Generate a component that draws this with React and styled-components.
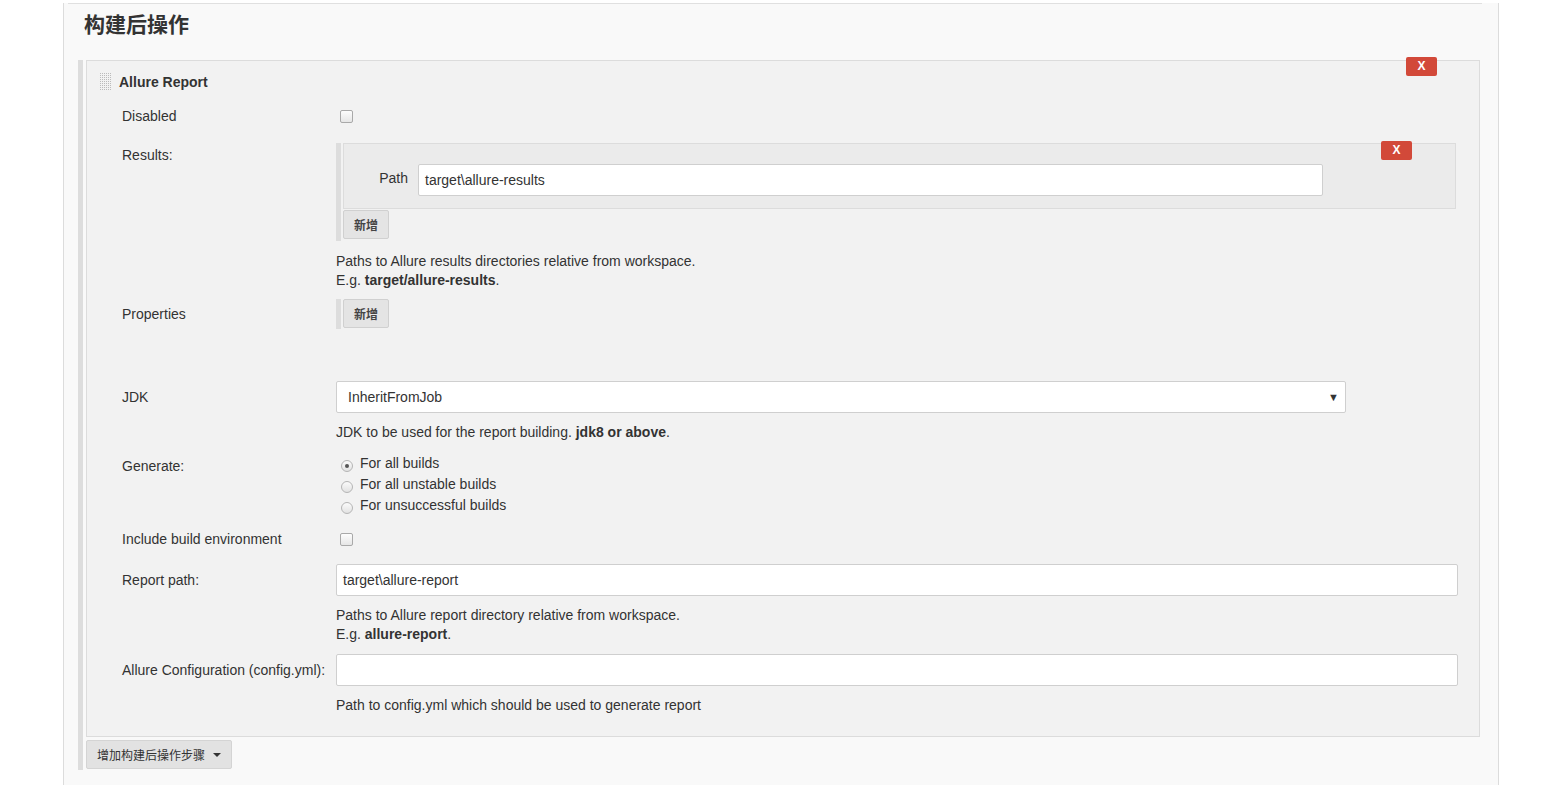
import React from "react";
import styled, { createGlobalStyle } from "styled-components";

const GlobalStyle = createGlobalStyle`
  html, body {
    margin: 0;
    padding: 0;
    background: #fff;
    font-family: "Liberation Sans", Arial, "Noto Sans CJK SC", sans-serif;
    font-size: 14px;
    color: #333;
  }
`;

const Page = styled.div`
  padding-left: 63px;
  height: 785px;
  overflow: hidden;
`;

const Main = styled.div`
  width: 1434px;
  height: 100%;
  background: #f9f9f9;
  border-left: 1px solid #dcdcdc;
  border-right: 1px solid #dcdcdc;
`;

const Section = styled.div`
  margin: 3px 16px 0 4px;
  border-top: 1px solid #e0e0e0;
`;

const SectionTitle = styled.h2`
  margin: 5px 0 0 16px;
  font-size: 21px;
  line-height: 28px;
  font-weight: bold;
  color: #333;
  font-family: "Noto Sans CJK SC", sans-serif;
`;

const Repeated = styled.div`
  margin: ${(p) => p.$margin};
  border-left: 5px solid #dddddd;
  padding-left: ${(p) => p.$gap || 2}px;
  padding-bottom: ${(p) => p.$bottom || 0}px;
`;

const Chunk = styled.div`
  position: relative;
  background: #f2f2f2;
  border: 1px solid #dcdcdc;
  padding: 0 21px 21px 35px;
`;

const ChunkHeader = styled.div`
  display: flex;
  align-items: center;
  height: 42px;
  margin-left: -22px;
  gap: 7px;
  font-weight: bold;
`;

const DeleteButton = styled.button`
  position: absolute;
  top: ${(p) => p.$top}px;
  right: ${(p) => p.$right}px;
  width: 31px;
  height: 19px;
  padding: 0;
  border: none;
  border-radius: 2px;
  background: #d24939;
  color: #fff;
  font-family: "Liberation Sans", Arial, sans-serif;
  font-size: 12px;
  font-weight: bold;
  line-height: 19px;
  cursor: pointer;
`;

const Row = styled.div`
  display: grid;
  grid-template-columns: 214px 1fr;
  align-items: ${(p) => p.$align || "center"};
  margin-top: ${(p) => p.$mt || 0}px;
  min-height: ${(p) => p.$h || 0}px;
`;

const Label = styled.div`
  line-height: 20px;
  padding-top: ${(p) => p.$pt || 0}px;
`;

const Help = styled.div`
  margin: ${(p) => p.$mt}px 0 0 214px;
  line-height: 19px;

  b {
    font-weight: bold;
  }
`;

const Checkbox = styled.span`
  display: block;
  width: 11px;
  height: 11px;
  margin-left: 4px;
  border: 1px solid #a9a9a9;
  border-radius: 2px;
  background: linear-gradient(#fdfdfd, #e6e6e6);
`;

const RadioList = styled.div`
  display: flex;
  flex-direction: column;
`;

const RadioItem = styled.label`
  display: flex;
  align-items: center;
  gap: 7px;
  height: 21px;
  line-height: 21px;
`;

const Radio = styled.span`
  position: relative;
  top: 2px;
  width: 10px;
  height: 10px;
  margin-left: 5px;
  border: 1px solid #b5b5b5;
  border-radius: 50%;
  background: linear-gradient(#fbfbfb, #e2e2e2);

  &::after {
    content: "";
    display: ${(p) => (p.$checked ? "block" : "none")};
    position: absolute;
    left: 3px;
    top: 3px;
    width: 4px;
    height: 4px;
    border-radius: 50%;
    background: #555;
  }
`;

const TextInput = styled.div`
  box-sizing: border-box;
  width: ${(p) => p.$w}px;
  height: 32px;
  padding: 0 6px;
  line-height: 30px;
  background: #fff;
  border: 1px solid #cfcfcf;
  border-radius: 2px;
`;

const Select = styled(TextInput)`
  display: flex;
  justify-content: space-between;
  padding: 0 6px 0 11px;
  font-size: 14px;

  span.arrow {
    font-size: 11px;
  }
`;

const InnerChunk = styled.div`
  position: relative;
  background: #ebebeb;
  border: 1px solid #dcdcdc;
  padding: 20px 0 12px 0;
`;

const PathRow = styled.div`
  display: flex;
  align-items: center;
  gap: 10px;
`;

const PathLabel = styled.span`
  width: 64px;
  text-align: right;
  line-height: 20px;
  position: relative;
  top: -2px;
`;

const AddButton = styled.button`
  display: block;
  margin-top: ${(p) => p.$mt || 0}px;
  width: 46px;
  height: 29px;
  padding: 0;
  border: 1px solid #d0d0d0;
  border-radius: 2px;
  background: #e4e4e4;
  color: #444;
  font-family: "Noto Sans CJK SC", sans-serif;
  font-size: 12px;
  font-weight: bold;
`;

const StepButton = styled.button`
  display: flex;
  align-items: center;
  gap: 8px;
  margin-top: 3px;
  height: 29px;
  padding: 0 10px;
  border: 1px solid #d4d4d4;
  border-radius: 2px;
  background: #e2e2e2;
  color: #333;
  font-family: "Noto Sans CJK SC", sans-serif;
  font-size: 12px;
`;

const Caret = styled.span`
  width: 0;
  height: 0;
  border-left: 4px solid transparent;
  border-right: 4px solid transparent;
  border-top: 4px solid #333;
`;

const DragHandle = () => {
  const dots = [];
  for (let r = 0; r < 9; r++) {
    for (let c = 0; c < 6; c++) {
      dots.push(<rect key={`${r}-${c}`} x={c * 2} y={r * 2} width="1" height="1" fill="#bbb" />);
    }
  }
  return (
    <svg width="12" height="18" viewBox="0 0 12 18">
      {dots}
    </svg>
  );
};

export default function App() {
  return (
    <>
      <GlobalStyle />
      <Page>
        <Main>
          <Section>
            <SectionTitle>构建后操作</SectionTitle>
          </Section>

          <Repeated $margin="23px 18px 0 14px" $gap={3} $bottom={1}>
            <Chunk>
              <DeleteButton $top={-4} $right={42}>X</DeleteButton>
              <ChunkHeader>
                <DragHandle />
                Allure Report
              </ChunkHeader>

              <Row $h={26}>
                <Label>Disabled</Label>
                <Checkbox />
              </Row>

              <Row $align="start" $mt={14}>
                <Label $pt={2}>Results:</Label>
                <Repeated $margin="0 2px 0 0" $bottom={2}>
                  <InnerChunk>
                    <DeleteButton $top={-3} $right={43}>X</DeleteButton>
                    <PathRow>
                      <PathLabel>Path</PathLabel>
                      <TextInput $w={905}>target\allure-results</TextInput>
                    </PathRow>
                  </InnerChunk>
                  <AddButton $mt={1}>新增</AddButton>
                </Repeated>
              </Row>
              <Help $mt={11}>
                Paths to Allure results directories relative from workspace.
                <br />
                E.g. <b>target/allure-results</b>.
              </Help>

              <Row $mt={9}>
                <Label>Properties</Label>
                <Repeated $margin="0" $bottom={1}>
                  <AddButton>新增</AddButton>
                </Repeated>
              </Row>

              <Row $mt={52}>
                <Label>JDK</Label>
                <Select $w={1010}>
                  InheritFromJob
                  <span className="arrow">▼</span>
                </Select>
              </Row>
              <Help $mt={10}>
                JDK to be used for the report building. <b>jdk8 or above</b>.
              </Help>

              <Row $align="start" $mt={11}>
                <Label $pt={3}>Generate:</Label>
                <RadioList>
                  <RadioItem>
                    <Radio $checked />
                    For all builds
                  </RadioItem>
                  <RadioItem>
                    <Radio />
                    For all unstable builds
                  </RadioItem>
                  <RadioItem>
                    <Radio />
                    For unsuccessful builds
                  </RadioItem>
                </RadioList>
              </Row>

              <Row $mt={13} $h={20}>
                <Label>Include build environment</Label>
                <Checkbox />
              </Row>

              <Row $mt={15}>
                <Label>Report path:</Label>
                <TextInput $w={1122}>target\allure-report</TextInput>
              </Row>
              <Help $mt={10}>
                Paths to Allure report directory relative from workspace.
                <br />
                E.g. <b>allure-report</b>.
              </Help>

              <Row $mt={10}>
                <Label>Allure Configuration (config.yml):</Label>
                <TextInput $w={1122} />
              </Row>
              <Help $mt={10}>Path to config.yml which should be used to generate report</Help>
            </Chunk>
            <StepButton>
              增加构建后操作步骤
              <Caret />
            </StepButton>
          </Repeated>
        </Main>
      </Page>
    </>
  );
}
